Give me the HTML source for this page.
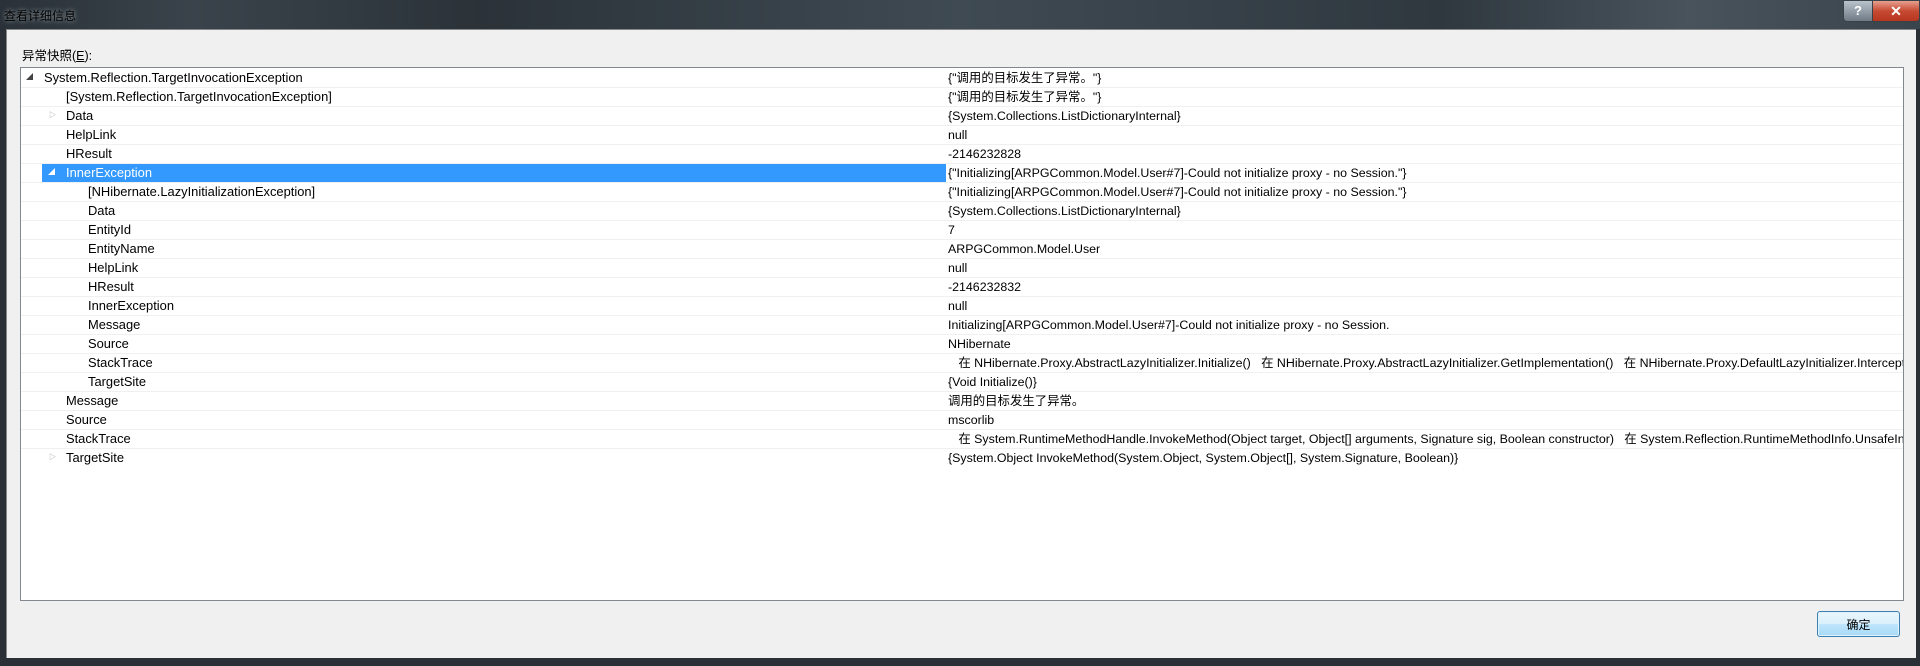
<!DOCTYPE html>
<html><head><meta charset="utf-8"><style>
html,body{margin:0;padding:0;width:1920px;height:666px;overflow:hidden;background:#f0f0f0;font-family:"Liberation Sans","Noto Sans CJK SC",sans-serif;font-size:12px;color:#000}
.title{position:absolute;left:0;top:0;width:1920px;height:29px;background:linear-gradient(90deg,#2a3138 0%,#3a434b 10%,#2b3339 25%,#3f4a53 50%,#2f383f 75%,#48535c 88%,#3a444c 100%)}
.title span{position:absolute;left:4px;top:7px;color:#000;font-size:12px;text-shadow:0 0 5px #aab4bc}
.lb{position:absolute;left:0;top:29px;width:6px;height:637px;background:#2a3036}
.rb{position:absolute;left:1916px;top:29px;width:4px;height:637px;background:#2a3036}
.bb{position:absolute;left:0;top:658px;width:1920px;height:8px;background:#2a3036}
.client{position:absolute;left:6px;top:29px;width:1911px;height:630px;background:#f0f0f0;border-left:1px solid #888;border-top:1px solid #888}
.help{position:absolute;left:1843px;top:0;width:28px;height:20px;background:linear-gradient(#b9c3cc,#6e7a85);border:1px solid #3a4249;border-radius:0 0 0 4px;color:#fff;font-weight:bold;text-align:center;line-height:20px;font-size:13px}
.close{position:absolute;left:1872px;top:0;width:46px;height:20px;background:linear-gradient(#e7a08f,#c64a33 50%,#b73620);border:1px solid #3a4249;border-radius:0 0 4px 0;color:#fff;font-weight:bold;text-align:center;line-height:20px;font-size:14px}
.label{position:absolute;left:22px;top:45px;font-size:12.5px}
.list{position:absolute;left:20px;top:67px;width:1882px;height:532px;background:#fff;border:1px solid #828790;overflow:hidden}
.row{position:absolute;left:0;height:19px;width:1882px;border-bottom:1px solid #f0f0f0;box-sizing:border-box;white-space:nowrap;line-height:18px}
.n{position:absolute;top:0;font-size:12.9px}
.v{position:absolute;left:927px;top:0;font-size:12.4px}
.sel{position:absolute;left:21px;width:904px;height:18px;background:#3399ff}
.ex{position:absolute;top:0;font-size:7px;color:#444}
.btn{position:absolute;left:1817px;top:611px;width:83px;height:26px;border:1px solid #3c7fb1;border-radius:3px;background:linear-gradient(#eaf6fd,#d9f0fc 50%,#bee6fd 51%,#a7d9f5);box-shadow:inset 0 0 0 1px #e0f2fb;text-align:center;line-height:26px;font-size:12px;box-sizing:border-box}
</style></head><body>
<div class="title"><span>查看详细信息</span></div>
<div class="help">?</div><div class="close">✕</div>
<div class="client"></div>
<div class="lb"></div><div class="rb"></div><div class="bb"></div>
<div class="label">异常快照(<u>E</u>):</div>
<div class="list">
<div class="row" style="top:1px"><span class="ex" style="left:5px">◢</span><span class="n" style="left:23px">System.Reflection.TargetInvocationException</span><span class="v">{"调用的目标发生了异常。"}</span></div>
<div class="row" style="top:20px"><span class="n" style="left:45px">[System.Reflection.TargetInvocationException]</span><span class="v">{"调用的目标发生了异常。"}</span></div>
<div class="row" style="top:39px"><span class="ex" style="left:28px;color:#999">▷</span><span class="n" style="left:45px">Data</span><span class="v">{System.Collections.ListDictionaryInternal}</span></div>
<div class="row" style="top:58px"><span class="n" style="left:45px">HelpLink</span><span class="v">null</span></div>
<div class="row" style="top:77px"><span class="n" style="left:45px">HResult</span><span class="v">-2146232828</span></div>
<div class="row" style="top:96px"><div class="sel"></div><span class="ex" style="left:27px;color:#fff">◢</span><span class="n" style="left:45px;color:#fff">InnerException</span><span class="v">{"Initializing[ARPGCommon.Model.User#7]-Could not initialize proxy - no Session."}</span></div>
<div class="row" style="top:115px"><span class="n" style="left:67px">[NHibernate.LazyInitializationException]</span><span class="v">{"Initializing[ARPGCommon.Model.User#7]-Could not initialize proxy - no Session."}</span></div>
<div class="row" style="top:134px"><span class="n" style="left:67px">Data</span><span class="v">{System.Collections.ListDictionaryInternal}</span></div>
<div class="row" style="top:153px"><span class="n" style="left:67px">EntityId</span><span class="v">7</span></div>
<div class="row" style="top:172px"><span class="n" style="left:67px">EntityName</span><span class="v">ARPGCommon.Model.User</span></div>
<div class="row" style="top:191px"><span class="n" style="left:67px">HelpLink</span><span class="v">null</span></div>
<div class="row" style="top:210px"><span class="n" style="left:67px">HResult</span><span class="v">-2146232832</span></div>
<div class="row" style="top:229px"><span class="n" style="left:67px">InnerException</span><span class="v">null</span></div>
<div class="row" style="top:248px"><span class="n" style="left:67px">Message</span><span class="v">Initializing[ARPGCommon.Model.User#7]-Could not initialize proxy - no Session.</span></div>
<div class="row" style="top:267px"><span class="n" style="left:67px">Source</span><span class="v">NHibernate</span></div>
<div class="row" style="top:286px"><span class="n" style="left:67px">StackTrace</span><span class="v">&nbsp;&nbsp;&nbsp;在 NHibernate.Proxy.AbstractLazyInitializer.Initialize()&nbsp;&nbsp;&nbsp;在 NHibernate.Proxy.AbstractLazyInitializer.GetImplementation()&nbsp;&nbsp;&nbsp;在 NHibernate.Proxy.DefaultLazyInitializer.Intercept()</span></div>
<div class="row" style="top:305px"><span class="n" style="left:67px">TargetSite</span><span class="v">{Void Initialize()}</span></div>
<div class="row" style="top:324px"><span class="n" style="left:45px">Message</span><span class="v">调用的目标发生了异常。</span></div>
<div class="row" style="top:343px"><span class="n" style="left:45px">Source</span><span class="v">mscorlib</span></div>
<div class="row" style="top:362px"><span class="n" style="left:45px">StackTrace</span><span class="v">&nbsp;&nbsp;&nbsp;在 System.RuntimeMethodHandle.InvokeMethod(Object target, Object[] arguments, Signature sig, Boolean constructor)&nbsp;&nbsp;&nbsp;在 System.Reflection.RuntimeMethodInfo.UnsafeInvokeInternal()</span></div>
<div class="row" style="top:381px;border-bottom:none"><span class="ex" style="left:28px;color:#999">▷</span><span class="n" style="left:45px">TargetSite</span><span class="v">{System.Object InvokeMethod(System.Object, System.Object[], System.Signature, Boolean)}</span></div>
</div>
<div class="btn">确定</div>
</body></html>
